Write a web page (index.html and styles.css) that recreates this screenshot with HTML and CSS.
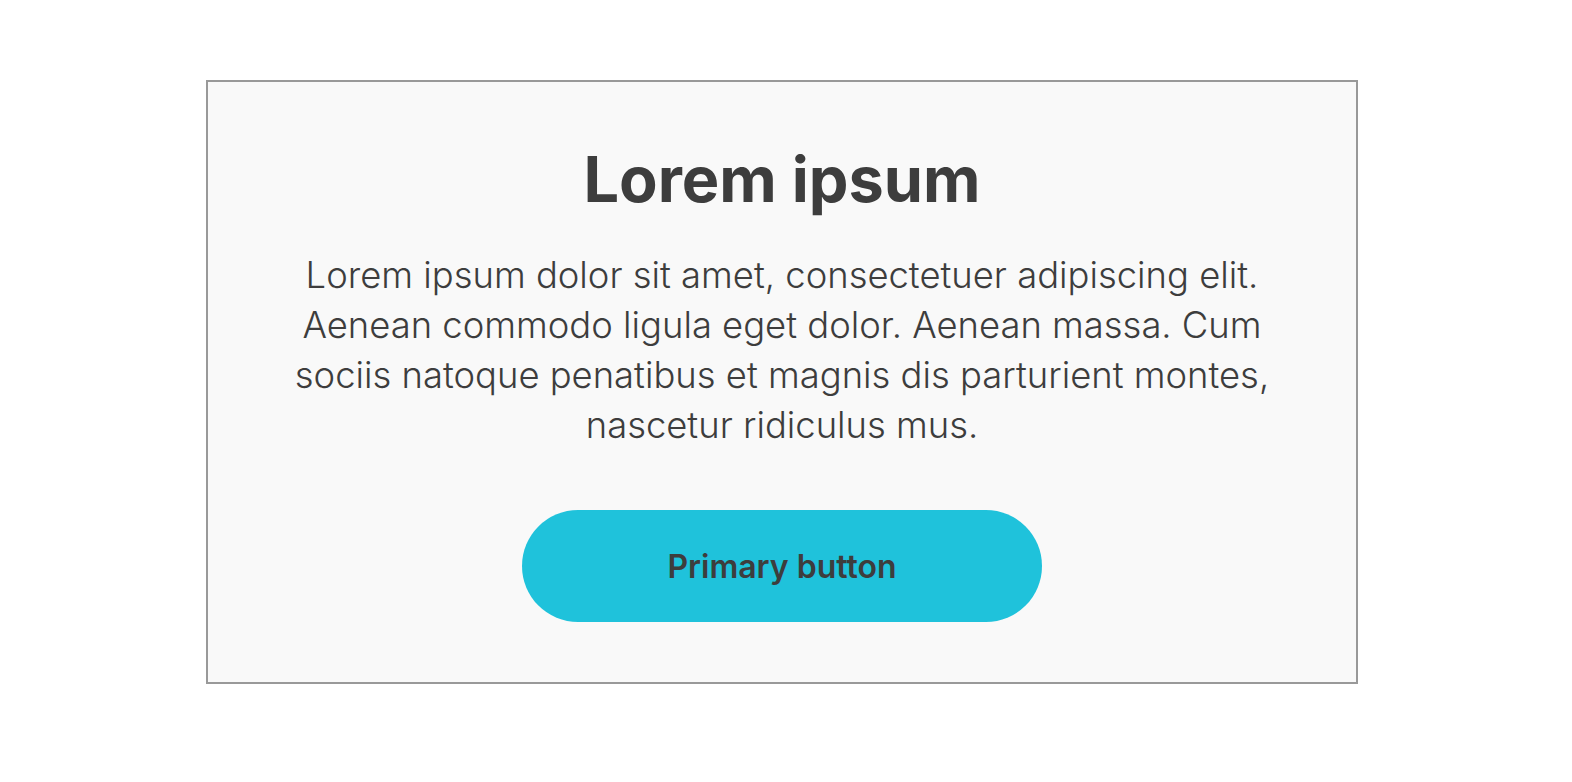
FILE: index.html
```html
<!DOCTYPE html>
<html lang="en">
<head>
<meta charset="utf-8">
<title>Card</title>
<link rel="stylesheet" href="styles.css">
</head>
<body>
<main class="page">
  <section class="card">
    <h1 class="card-title">Lorem ipsum</h1>
    <p class="card-text">Lorem ipsum dolor sit amet, consectetuer adipiscing elit. Aenean commodo ligula eget dolor. Aenean massa. Cum sociis natoque penatibus et magnis dis parturient montes, nascetur ridiculus mus.</p>
    <button class="btn-primary" type="button">Primary button</button>
  </section>
</main>
</body>
</html>
```

FILE: styles.css
```css
html, body {
  margin: 0;
  padding: 0;
  background: #ffffff;
}

body {
  font-family: Inter, "Noto Sans", sans-serif;
  color: #3d3d3d;
}

.page {
  padding: 80px 0 0 206px;
}

.card {
  box-sizing: border-box;
  width: 1152px;
  height: 604px;
  border: 2px solid #999999;
  background: #f9f9f9;
  display: flex;
  flex-direction: column;
  align-items: center;
  padding: 59px 80px 60px;
}

.card-title {
  margin: 0;
  font-size: 63px;
  line-height: 76px;
  font-weight: 700;
  color: #3d3d3d;
}

.card-text {
  margin: 33px 0 0;
  font-size: 36.4px;
  line-height: 50px;
  font-weight: 300;
  text-align: center;
  color: #3d3d3d;
}

.btn-primary {
  flex: none;
  margin-top: 60px;
  width: 520px;
  height: 112px;
  border: none;
  border-radius: 56px;
  background: #1fc2db;
  font-family: Inter, "Noto Sans", sans-serif;
  font-size: 32px;
  font-weight: 600;
  color: #3d3d3d;
  cursor: pointer;
}
```
